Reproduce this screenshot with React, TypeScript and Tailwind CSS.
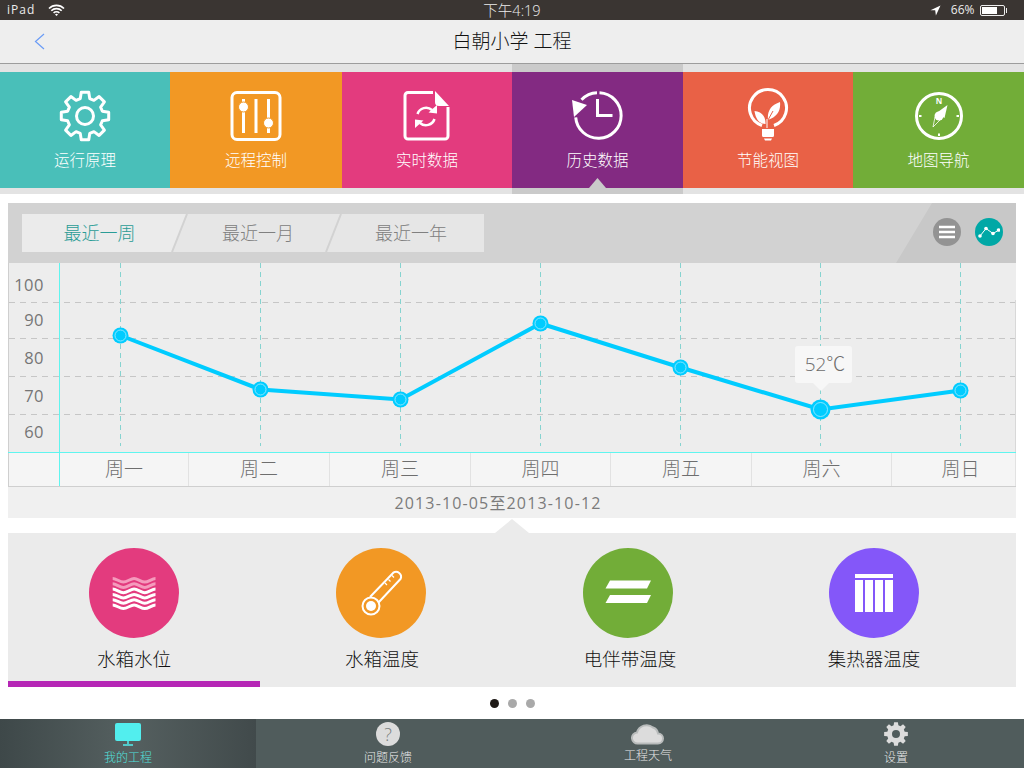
import React from "react";

function gearPath(cx: number, cy: number, ro: number, ri: number, teeth: number) {
  const pts: string[] = [];
  const step = (Math.PI * 2) / teeth;
  for (let i = 0; i < teeth; i++) {
    const a = i * step - Math.PI / 2;
    const list: [number, number][] = [
      [ri, a - step * 0.34],
      [ro, a - step * 0.2],
      [ro, a + step * 0.2],
      [ri, a + step * 0.34],
    ];
    for (const [r, t] of list) {
      pts.push(`${(cx + r * Math.cos(t)).toFixed(2)} ${(cy + r * Math.sin(t)).toFixed(2)}`);
    }
  }
  return "M" + pts.join("L") + "Z";
}

const W = "#ffffff";

function IconGear() {
  return (
    <svg width="56" height="56" viewBox="0 0 56 56" fill="none">
      <path d={gearPath(28, 28, 24, 18, 8)} stroke={W} strokeWidth="3" strokeLinejoin="round" />
      <circle cx="28" cy="28" r="8.500" stroke={W} strokeWidth="3" />
    </svg>
  );
}
function IconSliders() {
  return (
    <svg width="56" height="56" viewBox="228 88 56 56" fill="none">
      <rect x="232" y="92.500" width="48" height="47" rx="5" stroke={W} strokeWidth="3" />
      <path d="M243.500 99v34M256 99v34M268.500 99v34" stroke={W} strokeWidth="3" />
      <circle cx="243.500" cy="107" r="5" fill={W} stroke="#f29824" strokeWidth="1" />
      <circle cx="268.500" cy="123" r="5" fill={W} stroke="#f29824" strokeWidth="1" />
    </svg>
  );
}
function IconFile() {
  return (
    <svg width="56" height="56" viewBox="399 88 56 56" fill="none">
      <path d="M433 92.500H408a3 3 0 0 0-3 3V136a3 3 0 0 0 3 3h37a3 3 0 0 0 3-3V107" stroke={W} strokeWidth="3" />
      <path d="M435 91l14 15h-10a4 4 0 0 1-4-4z" fill={W} />
      <path d="M417.500 114a9 9 0 0 1 14.500-4M434.500 119a9 9 0 0 1-14.500 4" stroke={W} strokeWidth="2.500" />
      <path d="M437 105l0 8.500-8.500-1zM415 128l0-8.500 8.500 1z" fill={W} />
    </svg>
  );
}
function IconClock() {
  return (
    <svg width="56" height="56" viewBox="570 88 56 56" fill="none">
      <path d="M599.500 92.800a22.750 22.750 0 1 1-23.800 24.500" stroke={W} strokeWidth="3" />
      <path d="M597 92.750a22.750 22.750 0 0 0-15.500 7" stroke={W} strokeWidth="3" />
      <path d="M572 100l15 5-13 12z" fill={W} />
      <path d="M597.500 99v16.500h15" stroke={W} strokeWidth="3" />
    </svg>
  );
}
function IconBulb() {
  return (
    <svg width="56" height="56" viewBox="740 88 56 56" fill="none">
      <path d="M762 125.500a18.500 18.500 0 1 1 12 0" stroke={W} strokeWidth="3" />
      <path d="M762 129h12v6.500q0 1.500-1.500 1.500h-9q-1.500 0-1.500-1.500zM764 138.500h8l-1 2h-6z" fill={W} />
      <path d="M768 120c-1-9 3-15 12-18 1 9-3 15-12 18zM765.500 124c-6 0-10-5-11-13 6 0 11.500 5 11 13z" fill={W} />
      <path d="M768 120l5-9" stroke="#e96146" strokeWidth="1" />
      <path d="M767 128v-9" stroke={W} strokeWidth="1" />
    </svg>
  );
}
function IconCompass() {
  return (
    <svg width="56" height="56" viewBox="910 88 56 56" fill="none" className="font-['Open_Sans',sans-serif]">
      <circle cx="938" cy="116" r="22.500" stroke={W} strokeWidth="3" />
      <path d="M918 116h2.500M955.500 116h2.500M938 133.500v2.500" stroke={W} strokeWidth="2" />
      <text x="938" y="104" textAnchor="middle" fontSize="8" fontWeight="700" fill={W}>N</text>
      <path d="M946.500 105l-3 13-8-5z" fill={W} />
      <path d="M932 127l2-10 5 3z" stroke={W} strokeWidth="0.800" />
      <circle cx="938" cy="116" r="4.500" fill={W} />
    </svg>
  );
}

const tiles = [
  { w: "w-[170px]", bg: "bg-[#49bfb9]", label: "运行原理", icon: <IconGear /> },
  { w: "w-[172px]", bg: "bg-[#f29824]", label: "远程控制", icon: <IconSliders /> },
  { w: "w-[170px]", bg: "bg-[#e33b7e]", label: "实时数据", icon: <IconFile /> },
  { w: "w-[171px]", bg: "bg-[#832a82]", label: "历史数据", icon: <IconClock />, active: true },
  { w: "w-[170px]", bg: "bg-[#e96146]", label: "节能视图", icon: <IconBulb /> },
  { w: "w-[171px]", bg: "bg-[#72ad38]", label: "地图导航", icon: <IconCompass /> },
];

const points: [number, number][] = [
  [120, 335],
  [260, 389],
  [400, 399],
  [540, 323],
  [680, 367],
  [820, 409],
  [960, 390],
];

function Chart() {
  return (
    <svg className="block w-[1008px] h-[190px]" viewBox="8 263 1008 190" fill="none">
      {[302, 338, 376, 414].map((y) => (
        <line key={y} x1="9" x2="1015" y1={y + 0.5} y2={y + 0.5} stroke="#c6c6c6" strokeDasharray="6 5" />
      ))}
      {points.map(([x]) => (
        <line key={x} x1={x + 0.5} x2={x + 0.5} y1="263" y2="446" stroke="#86d3d0" strokeDasharray="5 4" />
      ))}
      <line x1="59.500" x2="59.500" y1="263" y2="453" stroke="#5ff5ef" />
      <line x1="8.500" x2="8.500" y1="263" y2="453" stroke="#cfcfcf" />
      <line x1="1015.500" x2="1015.500" y1="300" y2="453" stroke="#d8d8d8" />
      <line x1="8" x2="1016" y1="452.500" y2="452.500" stroke="#5ff5ef" />
      {[
        ["100", 291],
        ["90", 326],
        ["80", 364],
        ["70", 402],
        ["60", 438],
      ].map(([t, y]) => (
        <text key={t} x="44" y={y} textAnchor="end" fontSize="16.500" fill="#757575" letterSpacing="0.500">
          {t}
        </text>
      ))}
      <polyline points={points.map(([x, y]) => `${x + 0.5},${y + 0.5}`).join(" ")} stroke="#00ccff" strokeWidth="4" />
      {points.map(([x, y], i) => (
        <g key={x}>
          <circle cx={x + 0.5} cy={y + 0.5} r={i === 5 ? 10 : 8} fill="#00ccff" />
          <circle cx={x + 0.5} cy={y + 0.5} r={i === 5 ? 7 : 5.500} stroke="#a8ecff" strokeWidth="0.800" />
        </g>
      ))}
    </svg>
  );
}

const axis = [
  { w: "w-[52px]", t: "", cls: "border-l border-l-[#cfcfcf] border-r-[#5ff5ef]" },
  { w: "w-[129px]", t: "周一", cls: "border-r-[#e2e2e2]" },
  { w: "w-[141px]", t: "周二", cls: "border-r-[#e2e2e2]" },
  { w: "w-[141px]", t: "周三", cls: "border-r-[#e2e2e2]" },
  { w: "w-[140px]", t: "周四", cls: "border-r-[#e2e2e2]" },
  { w: "w-[141px]", t: "周五", cls: "border-r-[#e2e2e2]" },
  { w: "w-[140px]", t: "周六", cls: "border-r-[#e2e2e2]" },
  { w: "w-[124px]", t: "周日", cls: "pl-[14px] border-r-[#e2e2e2]" },
];

const wavePeaks = [5.5, 10.8, 16.1, 21.4, 26.7, 32];

const metrics = [
  {
    w: "w-[252px]",
    bg: "bg-[#e33b7e]",
    label: "水箱水位",
    lcls: "",
    icon: (
      <svg width="50" height="40" viewBox="0 0 50 40" fill="none">
        {wavePeaks.map((y, i) => (
          <path
            key={y}
            d={`M3.700 ${y}c3.500 0 7 3.600 10.700 3.600s7.200 -3.600 10.700 -3.600s7.200 3.600 10.700 3.600s7.200 -3.600 10.700 -3.600`}
            stroke={i < 2 ? "#f59bbd" : "#ffffff"}
            strokeWidth="3"
          />
        ))}
      </svg>
    ),
  },
  {
    w: "w-[242px]",
    bg: "bg-[#f29824]",
    label: "水箱温度",
    lcls: "ml-[2px]",
    icon: (
      <svg width="60" height="60" viewBox="0 0 60 60" fill="none">
        <path
          d="M19 34L42.300 9.700A5 5 0 0 1 49.700 15.700L27.300 39.700"
          stroke={W}
          strokeWidth="2"
          strokeLinejoin="round"
        />
        <circle cx="20" cy="43" r="8.500" stroke={W} strokeWidth="2" />
        <circle cx="20" cy="43" r="5" fill={W} />
        <path d="M43 14.500l-2-2M39.500 18.500l-2-2M36 22l-2-2" stroke={W} strokeWidth="1.200" />
      </svg>
    ),
  },
  {
    w: "w-[252px]",
    bg: "bg-[#72ad38]",
    label: "电伴带温度",
    lcls: "ml-[4px]",
    icon: (
      <svg width="48" height="26" viewBox="0 0 48 26" fill="none">
        <path d="M6 0.500H47L43 8.500H1.500zM6 15H47L43 23H1.500z" fill={W} />
      </svg>
    ),
  },
  {
    w: "w-[240px]",
    bg: "bg-[#8457f9]",
    label: "集热器温度",
    lcls: "",
    icon: (
      <svg width="38" height="38" viewBox="0 0 38 38" fill="none">
        <path d="M0 0h38v4H0zM0 6h8v32H0zM10 6h8v32h-8zM20 6h8v32h-8zM30 6h8v32h-8z" fill={W} />
      </svg>
    ),
  },
];

export default function App() {
  return (
    <div className="w-[1024px] h-[768px] overflow-hidden bg-white flex flex-col font-['Open_Sans','Noto_Sans_CJK_SC',sans-serif]">
      {/* status bar */}
      <div className="h-[20px] shrink-0 bg-[#3a3532] text-[#ececec] flex items-center px-[7px] text-[12px]">
        <div className="flex-1 flex items-center">
          <span className="tracking-[1px]">iPad</span>
          <svg className="ml-[13px]" width="17" height="12" viewBox="0 0 17 12" fill="none">
            <path d="M1 4.500a10.500 10.500 0 0 1 15 0M3.300 6.800a7.200 7.200 0 0 1 10.400 0M5.600 9a4 4 0 0 1 5.800 0" stroke="#fff" strokeWidth="1.600" />
            <path d="M7 10.500a2 2 0 0 1 3 0l-1.500 1.500z" fill="#fff" />
          </svg>
        </div>
        <span className="text-[14.500px] font-light pt-[1px]">下午4:19</span>
        <div className="flex-1 flex items-center justify-end">
          <svg className="mr-[10px]" width="11" height="11" viewBox="0 0 11 11">
            <path d="M10.500 0.500L0.500 5.300h4.700l0.700 5.200z" fill="#fff" />
          </svg>
          <span className="text-[12px] mr-[5px]">66%</span>
          <div className="w-[25px] h-[11px] border border-[#eee] rounded-[2px] p-[1px] mr-[1px]">
            <div className="w-[15px] h-full bg-white" />
          </div>
          <div className="w-[1.500px] h-[5px] bg-[#eee] mr-[10px]" />
        </div>
      </div>

      {/* nav bar */}
      <div className="h-[44px] shrink-0 bg-[#eeeeee] border-b border-[#9c9c9c] flex items-center relative">
        <svg className="absolute left-[34px] top-[13px]" width="11" height="17" viewBox="0 0 11 17" fill="none">
          <path d="M10 1L1.500 8.500L10 16" stroke="#6b9cf6" strokeWidth="1.200" />
        </svg>
        <div className="w-full text-center text-[19px] font-light text-[#111]">白朝小学 工程</div>
      </div>

      {/* tiles */}
      <div className="flex h-[130px] shrink-0 bg-[#e3e3e3]">
        {tiles.map((t) => (
          <div key={t.label} className={`${t.w} flex flex-col pt-[8px] pb-[6px] ${t.active ? "bg-[#cacaca]" : ""}`}>
            <div className={`${t.bg} h-[116px] flex flex-col items-center pt-[16px] relative`}>
              {t.icon}
              <div className="mt-[5px] text-[15.500px] font-light leading-[22px] text-white">{t.label}</div>
              {t.active && (
                <div className="absolute bottom-0 left-[77px] w-[17px] h-[10px] bg-[#cacaca] [clip-path:polygon(50%_0,100%_100%,0_100%)]" />
              )}
            </div>
          </div>
        ))}
      </div>

      {/* chart panel */}
      <div className="mx-[8px] mt-[9px] shrink-0">
        <div className="h-[60px] bg-[#d2d2d2] relative flex items-center pl-[14px]">
          <div className="flex w-[462px] h-[38px] bg-[#e6e6e6] text-[18px] font-light relative">
            <div className="w-[165px] pr-[10px] bg-[#ebebeb] text-[#2a9c96] flex items-center justify-center [clip-path:polygon(0_0,100%_0,150px_100%,0_100%)]">最近一周</div>
            <div className="w-[142px] text-[#808080] flex items-center justify-center">最近一月</div>
            <div className="w-[155px] pl-[9px] text-[#808080] flex items-center justify-center">最近一年</div>
            <svg className="absolute inset-0" width="462" height="38" viewBox="0 0 462 38" fill="none">
              <path d="M165 0L150 38M319 0L304 38" stroke="#d2d2d2" strokeWidth="2" />
            </svg>
          </div>
          <div className="absolute right-0 top-0 w-[120px] h-full bg-[#c8c8c8] [clip-path:polygon(36px_0,100%_0,100%_100%,0_100%)]" />
          <div className="absolute right-[55px] top-[15px] w-[28px] h-[28px] rounded-full bg-[#939393] flex items-center justify-center">
            <svg width="16" height="14" viewBox="0 0 16 14" fill="none">
              <path d="M0 2h16M0 7h16M0 12h16" stroke="#fff" strokeWidth="2.500" />
            </svg>
          </div>
          <div className="absolute right-[13px] top-[15px] w-[28px] h-[28px] rounded-full bg-[#00a8a6] flex items-center justify-center">
            <svg width="22" height="12" viewBox="0 0 22 12" fill="none">
              <path d="M2 10L8 2.500l7 5L21 4" stroke="#fff" strokeWidth="1" />
              <circle cx="2" cy="10" r="1.800" fill="#fff" />
              <circle cx="8" cy="2.500" r="1.800" fill="#fff" />
              <circle cx="15" cy="7.500" r="1.800" fill="#fff" />
              <circle cx="20.500" cy="4" r="1.800" fill="#fff" />
            </svg>
          </div>
        </div>

        <div className="bg-[#ededed] relative">
          <Chart />
          <div className="absolute left-[787px] top-[83px] w-[57px] h-[37px] pl-[3px] rounded-[3px] bg-[#f7f7f7] text-[#6c6c6c] text-[19px] font-light flex items-center justify-center">
            52℃
          </div>
          <div className="absolute left-[805px] top-[120px] w-[16px] h-[8px] bg-[#f7f7f7] [clip-path:polygon(0_0,100%_0,50%_100%)]" />
        </div>

        <div className="flex h-[34px] bg-[#f5f5f5] border-b border-[#cfcfcf] text-[19px] font-light text-[#6e6e6e]">
          {axis.map((a, i) => (
            <div key={i} className={`${a.w} ${a.cls} flex items-center justify-center border-r`}>
              {a.t}
            </div>
          ))}
        </div>

        <div className="h-[31px] bg-[#f0f0f0] flex items-center justify-center pr-[28px] text-[16px] tracking-[1.150px] text-[#7b7b7b]">
          2013-10-05至2013-10-12
        </div>
      </div>

      <div className="h-[15px] shrink-0 flex justify-center">
        <div className="w-[34px] h-[14px] mt-[1px] bg-[#ebebeb] [clip-path:polygon(50%_0,100%_100%,0_100%)]" />
      </div>

      {/* metrics */}
      <div className="mx-[8px] h-[154px] shrink-0 bg-[#ebebeb] relative flex">
        {metrics.map((m) => (
          <div key={m.label} className={`${m.w} flex flex-col items-center pt-[15px]`}>
            <div className={`${m.bg} w-[90px] h-[90px] rounded-full flex items-center justify-center`}>{m.icon}</div>
            <div className={`mt-[7px] text-[18.500px] font-light leading-[28px] text-[#111] ${m.lcls}`}>{m.label}</div>
          </div>
        ))}
        <div className="absolute left-0 bottom-0 w-[252px] h-[6px] bg-[#b526b5]" />
      </div>

      {/* pager */}
      <div className="h-[32px] shrink-0 flex items-center justify-center gap-[9px]">
        <div className="w-[9px] h-[9px] rounded-full bg-[#1f1a17]" />
        <div className="w-[9px] h-[9px] rounded-full bg-[#a9a9a9]" />
        <div className="w-[9px] h-[9px] rounded-full bg-[#a9a9a9]" />
      </div>

      {/* tab bar */}
      <div className="h-[49px] shrink-0 bg-[#505c5c] flex text-[12px] font-light text-[#e8e8e8]">
        <div className="w-[256px] flex flex-col items-center bg-gradient-to-r from-[#3e4849] via-[#556060] to-[#414a4b] text-[#52e0dc]">
          <svg className="mt-[4px]" width="28" height="23" viewBox="0 0 28 23" fill="none">
            <rect x="1" y="0" width="26" height="18" rx="2" fill="#52eeee" />
            <path d="M14 18v3M9 22h10" stroke="#52eeee" strokeWidth="1.500" />
          </svg>
          <span className="leading-[18px] mt-[3px]">我的工程</span>
        </div>
        <div className="w-[256px] flex flex-col items-center pl-[8px]">
          <div className="mt-[3px] w-[24px] h-[24px] rounded-full bg-[#dcdcdc] text-[#7a8080] text-[18px] leading-[24px] text-center">?</div>
          <span className="leading-[18px] mt-[3px]">问题反馈</span>
        </div>
        <div className="w-[256px] flex flex-col items-center pl-[16px]">
          <svg className="mt-[4px]" width="34" height="22" viewBox="0 0 34 22" fill="none">
            <path
              d="M7 20.500a5.500 5.500 0 0 1-1-11a10 10 0 0 1 16-5a7.500 7.500 0 0 1 5 6a5 5 0 0 1 0 10z"
              fill="#dcdcdc"
              stroke="#b9bcbc"
              strokeWidth="2"
            />
          </svg>
          <span className="leading-[18px] mt-[2px]">工程天气</span>
        </div>
        <div className="w-[256px] flex flex-col items-center">
          <svg className="mt-[3px]" width="24" height="24" viewBox="0 0 24 24">
            <path fillRule="evenodd" d={gearPath(12, 12, 12, 9, 8) + "M12 8a4 4 0 1 0 0 8a4 4 0 1 0 0-8z"} fill="#dcdcdc" />
          </svg>
          <span className="leading-[18px] mt-[3px]">设置</span>
        </div>
      </div>
    </div>
  );
}
